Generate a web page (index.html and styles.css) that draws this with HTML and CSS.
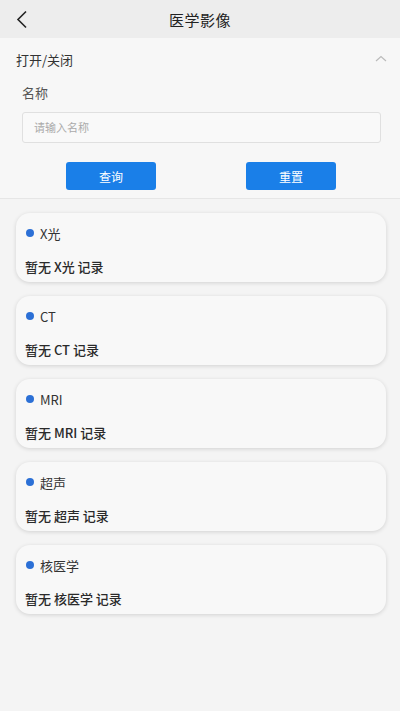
FILE: index.html
```html
<!DOCTYPE html>
<html lang="zh">
<head>
<meta charset="utf-8">
<link rel="stylesheet" href="styles.css">
</head>
<body>
<div class="app">
  <header class="topbar">
    <svg class="back" width="13" height="19" viewBox="0 0 13 19"><path d="M11 1.5 L3 9.5 L11 17.5" fill="none" stroke="#222" stroke-width="1.6"/></svg>
    <div class="title">医学影像</div>
  </header>
  <section class="filter">
    <div class="toggle">
      <span>打开/关闭</span>
      <svg class="up" width="12" height="7" viewBox="0 0 12 7"><path d="M1 6 L6 1.5 L11 6" fill="none" stroke="#bbb" stroke-width="1.2"/></svg>
    </div>
    <div class="label">名称</div>
    <div class="input">请输入名称</div>
    <div class="btns">
      <button class="btn">查询</button>
      <button class="btn">重置</button>
    </div>
  </section>
  <main class="list">
    <div class="card"><div class="ctitle"><i class="dot"></i>X光</div><div class="cbody">暂无 X光 记录</div></div>
    <div class="card"><div class="ctitle"><i class="dot"></i>CT</div><div class="cbody">暂无 CT 记录</div></div>
    <div class="card"><div class="ctitle"><i class="dot"></i>MRI</div><div class="cbody">暂无 MRI 记录</div></div>
    <div class="card"><div class="ctitle"><i class="dot"></i>超声</div><div class="cbody">暂无 超声 记录</div></div>
    <div class="card"><div class="ctitle"><i class="dot"></i>核医学</div><div class="cbody">暂无 核医学 记录</div></div>
  </main>
</div>
</body>
</html>
```
FILE: styles.css
```css
* { box-sizing: border-box; margin: 0; padding: 0; }
html, body { width: 400px; height: 711px; }
body {
  background: #f4f4f4;
  font-family: "Noto Sans CJK SC", "Noto Sans", sans-serif;
  color: #222;
  overflow: hidden;
}
.app { width: 400px; min-height: 711px; background: #f4f4f4; }
.topbar {
  height: 38px;
  background: #ededed;
  display: flex;
  align-items: center;
  justify-content: center;
  position: relative;
}
.back { position: absolute; left: 15px; top: 10px; }
.title { font-size: 15px; color: #222; letter-spacing: 0.5px; }
.filter {
  background: #f7f7f7;
  border-bottom: 1px solid #e6e6e6;
  height: 161px;
}
.toggle {
  height: 42px;
  display: flex;
  align-items: center;
  justify-content: space-between;
  padding: 0 13px 0 16px;
  font-size: 13px;
  color: #333;
}
.up { margin-top: -2px; }
.label {
  padding-left: 22px;
  font-size: 13px;
  color: #555;
  height: 24px;
  line-height: 24px;
  margin-top: 1px;
}
.input {
  margin: 7px 19px 0 22px;
  height: 31px;
  border: 1px solid #e0e0e0;
  border-radius: 3px;
  background: #f9f9f9;
  font-size: 11px;
  color: #aaa;
  line-height: 29px;
  padding-left: 11px;
}
.btns {
  display: flex;
  justify-content: space-between;
  padding: 0 64px 0 66px;
  margin-top: 19px;
}
.btn {
  width: 90px;
  height: 28px;
  border: none;
  border-radius: 3px;
  background: #1a7fe8;
  color: #fff;
  font-family: inherit;
  font-size: 12px;
}
.list {
  padding: 14px 14px 0 16px;
  display: flex;
  flex-direction: column;
  gap: 14px;
}
.card {
  height: 69px;
  background: #f8f8f8;
  border-radius: 14px;
  box-shadow: 0 1px 4px rgba(0,0,0,0.14);
  padding: 10px 9px 0 9px;
}
.ctitle {
  display: flex;
  align-items: center;
  font-size: 13px;
  color: #333;
  height: 20px;
}
.dot {
  width: 8px;
  height: 8px;
  border-radius: 50%;
  background: #2c70d6;
  margin: 0 6px 0 1px;
}
.cbody {
  margin-top: 14px;
  font-size: 13px;
  color: #2a2a2a;
  font-weight: 500;
  height: 20px;
  line-height: 20px;
}
```
